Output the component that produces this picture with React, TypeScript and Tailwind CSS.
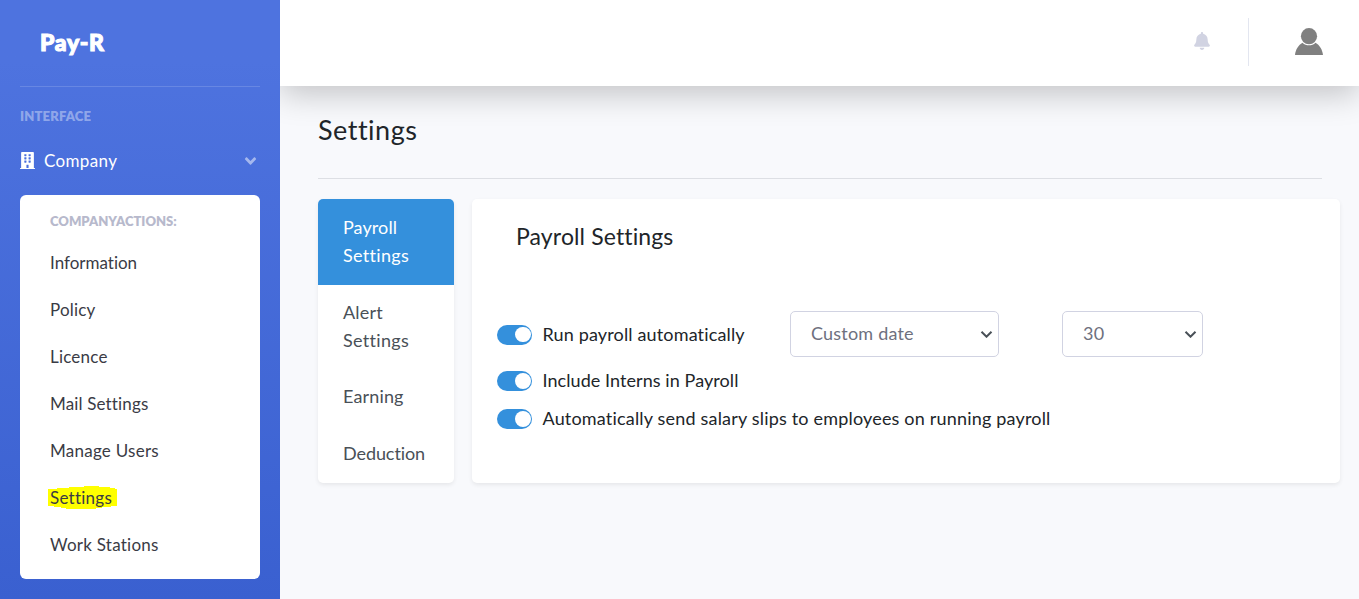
import React from 'react';
import { FaAngleDown, FaBell, FaBuilding } from 'react-icons/fa';

const companyLinks = [
  { label: 'Information', style: 'tracking-[0px]' },
  { label: 'Policy', style: 'tracking-[0.2px]' },
  { label: 'Licence', style: 'tracking-[0.2px]' },
  { label: 'Mail Settings', style: 'tracking-[0.15px]' },
  { label: 'Manage Users', style: 'tracking-[0.25px]' },
  { label: 'Settings', style: 'tracking-[0.25px]', marked: true },
  { label: 'Work Stations', style: 'tracking-[0.25px]' },
];

function Sidebar() {
  return (
    <aside className="relative z-20 flex w-[280px] shrink-0 flex-col bg-linear-to-b from-[#4e73df] from-10% to-[#3a60d0] px-5">
      <div className="flex h-[86px] items-center pb-0.5 pl-5">
        <span className="text-[23px] leading-none font-black tracking-[0.7px] text-white [-webkit-text-stroke:1.1px_white]">Pay-R</span>
      </div>
      <div className="h-px bg-white/15" />
      <div className="mt-[19px] h-5 text-[13px] leading-5 font-extrabold tracking-[0.17px] text-white/40">
        <span>INTERFACE</span>
      </div>
      <div className="mt-[21px] flex h-[28px] items-center text-white">
        <FaBuilding className="mb-px h-[17px] w-[15px]" />
        <span className="ml-[9px] text-[17px] leading-7 tracking-[0.35px]">Company</span>
        <FaAngleDown className="mr-[3px] ml-auto h-[18px] w-[13px] text-white/50" />
      </div>
      <nav className="mt-5 h-[384px] rounded-[6px] bg-white pt-[15px] pl-[30px]">
        <div className="h-[22px] text-[13px] leading-[22px] font-extrabold text-[#b7b9cc]">
          <span>COMPANYACTIONS:</span>
        </div>
        <div className="mt-[7px]">
          {companyLinks.map((link) => (
            <a key={link.label} className="relative flex h-[47px] items-center text-[17px] text-[#3a3b45]">
              {link.marked && (
                <svg className="absolute top-[12px] -left-[2px]" width="69" height="24" viewBox="0 0 69 24" fill="#ffff00">
                  <path d="M0 3h9V2h12V1h15V0h15v1h11v1h5v1h2v17H63v1h-9v1h-6v1H18v-1h-5v-1H6v-1H0z" />
                </svg>
              )}
              <span className={`relative ${link.style}`}>{link.label}</span>
            </a>
          ))}
        </div>
      </nav>
    </aside>
  );
}

function TopBar() {
  return (
    <header className="relative z-10 flex h-[86px] items-center justify-end bg-white pr-[36px] shadow-[0_8px_32px_rgba(0,0,0,0.22)]">
      <FaBell className="mb-[5px] h-[18px] w-4 text-[#d1d3e2]" />
      <div className="mt-[-2px] ml-[38px] h-12 w-px bg-[#e3e6f0]" />
      <svg className="mb-[3px] ml-[46px]" width="28" height="27" viewBox="0 0 28 27" fill="#808080">
        <circle cx="14" cy="8.2" r="8.1" />
        <path d="M0 27C.5 21.500 3.500 17 7.500 14.700C11 18.200 17 18.200 20.500 14.700C24.500 17 27.500 21.500 28 27Z" />
      </svg>
    </header>
  );
}

function SettingsTabs() {
  return (
    <div className="h-[284px] w-[136px] shrink-0 overflow-hidden rounded-[5px] bg-white text-[18px] leading-7 text-[#495057] shadow-[0_2px_4px_rgba(0,0,0,0.075)]">
      <div className="h-[86px] bg-[#3490dc] px-[25px] pt-[14px] text-white">
        <div><span className="tracking-[0.1px]">Payroll</span></div>
        <div><span className="tracking-[0.3px]">Settings</span></div>
      </div>
      <div className="px-[25px] pt-[13px]">
        <div><span className="tracking-[0.2px]">Alert</span></div>
        <div><span className="tracking-[0.3px]">Settings</span></div>
      </div>
      <div className="px-[25px] pt-7"><span className="tracking-[0.15px]">Earning</span></div>
      <div className="px-[25px] pt-[29px]"><span className="tracking-[-0.08px]">Deduction</span></div>
    </div>
  );
}

function Toggle() {
  return (
    <span className="flex h-5 w-[35px] shrink-0 items-center justify-end rounded-full bg-[#3490dc] pr-[1.500px]">
      <span className="size-[15.500px] rounded-full bg-white" />
    </span>
  );
}

function SelectBox({ label, box }: { label: string; box: string }) {
  return (
    <div className={`flex h-[46px] items-center justify-between rounded-[5px] border border-[#d1d3e2] bg-white pr-[5px] pl-5 text-[18px] text-[#6e707e] ${box}`}>
      <span className="pb-0.5 tracking-[0.2px]">{label}</span>
      <svg width="13" height="8" viewBox="0 0 13 8" fill="none" stroke="#495057" strokeWidth="2">
        <path d="M1.500 1.700L6.500 6.700L11.500 1.700" />
      </svg>
    </div>
  );
}

function PayrollPanel() {
  return (
    <section className="h-[284px] w-[868px] shrink-0 rounded-[5px] bg-white pl-[25px] text-[18px] text-[#212529] shadow-[0_2px_4px_rgba(0,0,0,0.075)]">
      <h2 className="pt-[21px] pl-[19px] text-[23px] leading-8"><span className="tracking-[0.13px]">Payroll Settings</span></h2>
      <div className="mt-[59px] flex h-[46px] items-center">
        <div className="flex w-[293px] items-center pt-px">
          <Toggle />
          <span className="ml-[10.500px] pb-px tracking-[0.15px]">Run payroll automatically</span>
        </div>
        <SelectBox label="Custom date" box="w-[209px]" />
        <SelectBox label="30" box="ml-[63px] w-[141px]" />
      </div>
      <div className="mt-[9px] flex h-[30px] items-center">
        <Toggle />
        <span className="ml-[10.500px] pb-0.5 tracking-[0.07px]">Include Interns in Payroll</span>
      </div>
      <div className="mt-2 flex h-[30px] items-center">
        <Toggle />
        <span className="ml-[10.500px] pb-0.5 tracking-[0.185px]">Automatically send salary slips to employees on running payroll</span>
      </div>
    </section>
  );
}

export default function App() {
  return (
    <div className="flex h-[599px] w-[1359px] overflow-hidden bg-[#f8f9fc] font-[Lato,'Open_Sans',sans-serif] [font-variant-ligatures:none]">
      <Sidebar />
      <div className="flex min-w-0 flex-1 flex-col">
        <TopBar />
        <main className="pl-[38px]">
          <div className="mr-[37px] h-[93px] border-b border-[#dddfe4] pt-[26px]">
            <h1 className="text-[27px] leading-9 text-[#212529]"><span className="tracking-[0.5px]">Settings</span></h1>
          </div>
          <div className="mt-5 flex gap-[18px]">
            <SettingsTabs />
            <PayrollPanel />
          </div>
        </main>
      </div>
    </div>
  );
}
